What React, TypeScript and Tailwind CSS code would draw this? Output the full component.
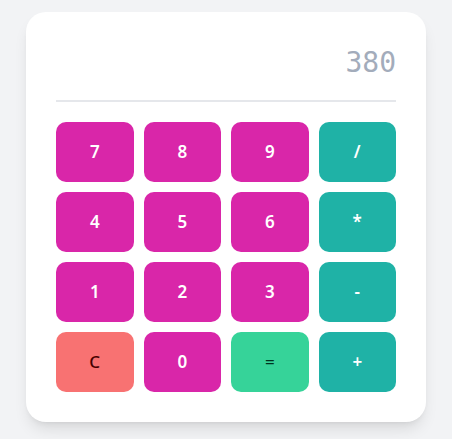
const keys = [
  { label: "7", kind: "num" },
  { label: "8", kind: "num" },
  { label: "9", kind: "num" },
  { label: "/", kind: "op" },
  { label: "4", kind: "num" },
  { label: "5", kind: "num" },
  { label: "6", kind: "num" },
  { label: "*", kind: "op" },
  { label: "1", kind: "num" },
  { label: "2", kind: "num" },
  { label: "3", kind: "num" },
  { label: "-", kind: "op" },
  { label: "C", kind: "clear" },
  { label: "0", kind: "num" },
  { label: "=", kind: "eq" },
  { label: "+", kind: "op" },
];

const styles: Record<string, string> = {
  num: "bg-[#d926a9] text-white font-semibold",
  op: "bg-[#1fb2a6] text-white font-semibold",
  clear: "bg-[#f87272] text-[#470000] font-medium",
  eq: "bg-[#36d399] text-[#003320] font-medium",
};

export default function App() {
  return (
    <div className="min-h-screen bg-[#f2f3f5] pt-3 flex justify-center font-['Noto_Sans',sans-serif]">
      <div className="w-[400px] h-[410px] bg-white rounded-[20px] p-[30px] shadow-[0_10px_15px_-3px_rgba(0,0,0,0.1),0_4px_6px_-4px_rgba(0,0,0,0.1)]">
        {/* Pantalla */}
        <div className="mt-[3px] text-right text-[28px] leading-[36px] text-[#a3acbb] font-['DejaVu_Sans_Mono',monospace]">
          380
        </div>
        <div className="mt-[19px] h-[2px] bg-[#e5e7eb]" />

        {/* Teclado */}
        <div className="mt-5 grid grid-cols-4 gap-x-[10px] gap-y-[10px]">
          {keys.map((k) => (
            <button
              key={k.label}
              className={
                "h-[60px] rounded-[10px] text-[17px] flex items-center justify-center " +
                styles[k.kind]
              }
            >
              {k.label}
            </button>
          ))}
        </div>
      </div>
    </div>
  );
}
